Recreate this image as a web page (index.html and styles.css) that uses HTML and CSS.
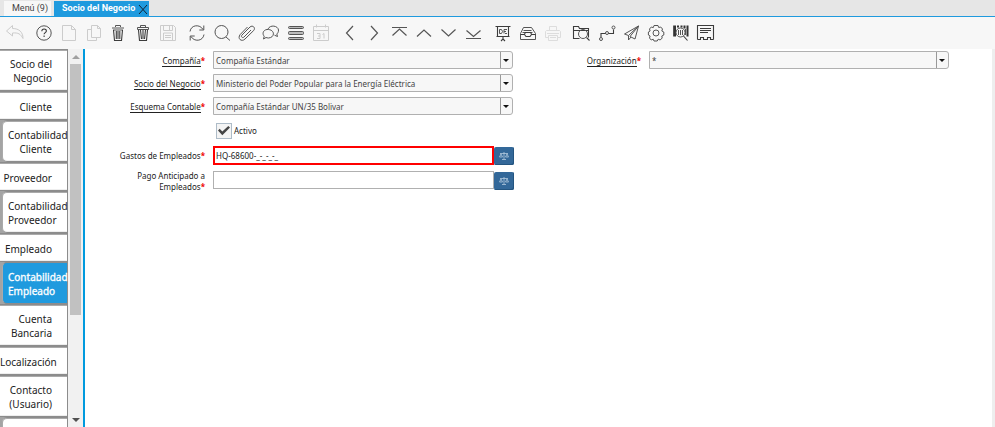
FILE: index.html
```html
<!DOCTYPE html>
<html lang="es">
<head>
<meta charset="utf-8">
<title>Socio del Negocio</title>
<link rel="stylesheet" href="styles.css">
</head>
<body>
<nav class="tabs">
  <a class="tab" href="#">Menú (9)</a>
  <a class="tab tab-active" href="#">Socio del Negocio
    <svg class="tab-close" viewBox="0 0 12 12" width="12" height="12"><path d="M2 2l8 9M10 2L2 11"/></svg>
  </a>
</nav>

<div class="toolbar">
  <div class="group group-one">
    <button class="off" aria-label="Deshacer"><svg viewBox="0 0 22 22"><path d="M8.500 3.500L2.500 9l6 5v-3c6-.500 8 1 10.500 5.500C19 10 15 6.500 8.500 6.500z"/></svg></button>
  </div>
  <div class="group">
    <button aria-label="Ayuda"><svg viewBox="0 0 22 22"><circle cx="11" cy="11" r="7.200"/><path class="bold" d="M8.800 9.300c0-3 4.600-3 4.600-.300 0 1.600-2.300 1.700-2.300 3.300M11.100 13.500v1.500"/></svg></button>
    <button class="off" aria-label="Nuevo"><svg viewBox="0 0 22 22"><path d="M4.500 3.500h9l4 4v11h-13zM13.500 3.500v4h4"/></svg></button>
    <button class="off" aria-label="Copiar"><svg viewBox="0 0 22 22"><path d="M8.500 3.500h6l3 3v9h-9zM14.500 3.500v3h3M8.500 7.500h-4v11h9v-3"/></svg></button>
    <button aria-label="Eliminar"><svg viewBox="0 0 22 22"><path d="M8.500 5V3.500h5V5M5 6h12M6 8h10"/><path class="bold" d="M6.500 8l1 10.500h7l1-10.500M9.300 9v8M11 9v8M12.800 9v8"/></svg></button>
    <button aria-label="Eliminar selección"><svg viewBox="0 0 22 22"><path d="M8.500 5V3.500h5V5M5.500 5.500h11v2h-11z"/><path class="bold" d="M6.500 8l1 10.500h7l1-10.500M8.500 8l1 9M13.500 8l-1 9M11 8v9"/></svg></button>
    <button class="off" aria-label="Guardar"><svg viewBox="0 0 22 22"><path d="M3.500 3.500h13l2 2v13h-15zM6.500 3.500v5h9v-5M12.500 4v4M6.500 18v-7h9v7M8 13.500h6M8 15.500h6"/></svg></button>
  </div>
  <div class="group">
    <button aria-label="Actualizar"><svg viewBox="0 0 22 22"><path d="M4 9.500C5 2.500 14 2 17 7.500M17.800 3.500v4.500h-4.500M18 12.500c-1 7-10 7.500-13 2M4.200 18.500V14h4.500"/></svg></button>
    <button aria-label="Buscar"><svg viewBox="0 0 22 22"><circle cx="10.500" cy="10" r="6.500"/><path d="M15 15l4 3.500"/></svg></button>
    <button aria-label="Adjuntos"><svg viewBox="0 0 22 22"><path d="M15 8l-7 7c-1.500 1.500-3.500-.300-2-2l8-8c2.500-2.300 6 .700 3.700 3.500L9 17c-3.500 3.500-8-.500-4.800-4.500L11.500 5"/></svg></button>
    <button aria-label="Mensajes"><svg viewBox="0 0 22 22"><path d="M8 7c2-4.500 10-3.500 10.500 1 .100 2-.700 3-1.700 4l.7 2.500-3-1.300M7 7.500c8-.500 8.500 8 1.500 8.500-1 0-2-.300-2.500-.500L3.500 17l.7-2.800C2 12 3 8 7 7.500z"/></svg></button>
    <button aria-label="Cuadrícula"><svg viewBox="0 0 22 22"><rect class="fill-grey" x="3.500" y="4.500" width="15" height="2" rx="1"/><rect class="fill-grey" x="3.500" y="9.500" width="15" height="3" rx="1"/><rect class="fill-grey" x="3.500" y="15.500" width="15" height="2" rx="1"/></svg></button>
    <button class="off" aria-label="Historial"><svg viewBox="0 0 22 22"><path d="M3.500 4.500h15v14h-15zM3.500 8.500h15M6.500 2.500v3M15.500 2.500v3M7 11.500h3v5H7M8 14h2M12.500 12.500l1.500-1v5"/></svg></button>
  </div>
  <div class="group">
    <button aria-label="Registro padre"><svg viewBox="0 0 22 22"><path class="arrow" d="M14 4l-6.500 7 6.500 7"/></svg></button>
    <button aria-label="Registro detalle"><svg viewBox="0 0 22 22"><path class="arrow" d="M7 4l6.500 7L7 18"/></svg></button>
    <button aria-label="Primer registro"><svg viewBox="0 0 22 22"><path class="arrow" d="M3 5.500h15M3.500 13.500l7-6.500 7 6.500"/></svg></button>
    <button aria-label="Registro anterior"><svg viewBox="0 0 22 22"><path class="arrow" d="M4 14.500L11 8l7 6.500"/></svg></button>
    <button aria-label="Registro siguiente"><svg viewBox="0 0 22 22"><path class="arrow" d="M3.500 7.500l7 6.500 7-6.500"/></svg></button>
    <button aria-label="Último registro"><svg viewBox="0 0 22 22"><path class="arrow" d="M3.500 8.500l7 6 7-6M3 16.500h15"/></svg></button>
  </div>
  <div class="group group-three">
    <button aria-label="Informe"><svg viewBox="0 0 22 22"><path class="bold" d="M3.500 4.500h15M5.500 14.500v-10M16.500 4.500v10M4.500 14.500h13M11 15v2l-2 2M11 17l2 2"/><path d="M7.500 7.500h2l1 2-1 2h-2zM15 7.500h-3v4M12 9.500h2M13 11.500h2"/></svg></button>
    <button aria-label="Archivo"><svg viewBox="0 0 22 22"><path d="M6.500 5.500h8l4 6v6h-15v-6zM6.500 8.500h8M5.500 10.500h10"/><path class="bold" d="M3.500 12.500h4l1.500 2h4l1.500-2h4M7.500 12l1-1.500h5l1 1.500"/></svg></button>
    <button class="off pale" aria-label="Imprimir"><svg viewBox="0 0 22 22"><path d="M7.500 9V4.500h7V9M6 15.500H3.500v-6l1-1h13l1 1v6H16M6.500 13.500h9v5h-9zM8 15.500h6M5 11.500h12"/></svg></button>
  </div>
  <div class="group">
    <button aria-label="Zoom"><svg viewBox="0 0 22 22"><path class="bold" d="M8.500 16.500h-6v-12h5l1 2h9v9M2.500 8.500h15"/><circle cx="12" cy="12" r="4.500"/><path class="bold" d="M15.500 15.500l3 3"/></svg></button>
    <button aria-label="Flujo de trabajo"><svg viewBox="0 0 22 22"><circle cx="5" cy="17" r="1.500"/><circle cx="11" cy="11" r="1.500"/><circle cx="17.500" cy="5.500" r="1.500"/><path class="bold" d="M5 15v-3.500h4.500M12.500 11.500h5V7.500"/></svg></button>
    <button aria-label="Enviar"><svg viewBox="0 0 22 22"><path d="M17.500 4L3.500 12l4 1.500L17.500 4 9 14.500l5 2.500 3.500-13M7.500 13.500V18l2.500-3"/></svg></button>
    <button aria-label="Proceso"><svg viewBox="0 0 22 22"><circle cx="11" cy="11" r="3"/><path d="M9 3.500h4l.7 2 2-.5 1.800 2-.7 2 2 1v3l-2 1 .4 2-2 2-2-.8-1 1.800H9l-.8-1.800-2 .8-1.700-2 .6-2-1.700-1v-3l1.700-1-.6-2 1.800-2 2 .6z"/></svg></button>
    <button aria-label="Información de producto"><svg viewBox="0 0 22 22"><path class="heavy" d="M5 3.500v11M8 3.500v2M11.500 3.500v2M14.500 3.500v3M17.500 3.500v11"/><path d="M3.500 3.500v11M15.500 7v6M8.500 8v5M10.500 8v5M12.500 8v5"/><circle cx="10.500" cy="10.500" r="4.500"/><path class="bold" d="M13.500 14l4 4.500"/></svg></button>
    <button aria-label="Formulario"><svg viewBox="0 0 22 22"><path class="bold" d="M2.500 17.500v-14h16v14M5 6.500h11M5 8.500h11M5 10.500h8M2.500 17.500h3v-2h3v2h4v-2h3v2h3"/></svg></button>
  </div>
</div>

<div class="workspace">
  <aside class="sidebar">
    <div class="side-list">
      <a class="side-tab" href="#">Socio del Negocio</a>
      <a class="side-tab" href="#">Cliente</a>
      <a class="side-tab nested" href="#">Contabilidad Cliente</a>
      <a class="side-tab" href="#">Proveedor</a>
      <a class="side-tab nested" href="#">Contabilidad Proveedor</a>
      <a class="side-tab" href="#">Empleado</a>
      <a class="side-tab nested current" href="#">Contabilidad Empleado</a>
      <a class="side-tab" href="#">Cuenta Bancaria</a>
      <a class="side-tab" href="#">Localización</a>
      <a class="side-tab" href="#">Contacto (Usuario)</a>
      <a class="side-tab nested" href="#" aria-label="Acceso"></a>
    </div>
    <div class="scrollbar">
      <span class="scroll-up"></span>
      <span class="scroll-track"><span class="scroll-thumb"></span></span>
      <span class="scroll-down"></span>
    </div>
  </aside>

  <main class="form">
    <label class="caption" for="company"><span><span class="link">Compañía</span><b>*</b></span></label>
    <div class="combo"><select id="company"><option>Compañía Estándar</option></select></div>
    <label class="caption" for="org"><span><span class="link">Organización</span><b>*</b></span></label>
    <div class="combo"><select id="org"><option>*</option></select></div>

    <label class="caption first" for="partner"><span><span class="link">Socio del Negocio</span><b>*</b></span></label>
    <div class="combo"><select id="partner"><option>Ministerio del Poder Popular para la Energía Eléctrica</option></select></div>

    <label class="caption first" for="schema"><span><span class="link">Esquema Contable</span><b>*</b></span></label>
    <div class="combo"><select id="schema"><option>Compañía Estándar UN/35 Bolivar</option></select></div>

    <div class="check"><input type="checkbox" id="active" checked><label for="active">Activo</label></div>

    <label class="caption first" for="expense"><span>Gastos de Empleados<b>*</b></span></label>
    <div class="account">
      <input class="required" type="text" id="expense" value="HQ-68600-_-_-_-_">
      <button aria-label="Cuenta de gastos"><svg viewBox="0 0 10 8" width="10" height="8"><path d="M5 0v7M3 7.500h4M1 1.500h8M2 2L.5 5h3zM8 2L6.500 5h3z"/></svg></button>
    </div>

    <label class="caption first wrap" for="prepay"><span>Pago Anticipado a Empleados<b>*</b></span></label>
    <div class="account">
      <input type="text" id="prepay">
      <button aria-label="Cuenta de anticipos"><svg viewBox="0 0 10 8" width="10" height="8"><path d="M5 0v7M3 7.500h4M1 1.500h8M2 2L.5 5h3zM8 2L6.500 5h3z"/></svg></button>
    </div>
  </main>
</div>
</body>
</html>
```

FILE: styles.css
```css
* { box-sizing: border-box; }

body {
  margin: 0;
  height: 100vh;
  overflow: hidden;
  display: flex;
  flex-direction: column;
  background: #fff;
  color: #222;
  font: 8px/11px "Noto Sans", sans-serif;
}

a { color: inherit; text-decoration: none; }
button { padding: 0; border: 0; background: none; }

/* window tabs */
.tabs {
  display: flex;
  gap: 3px;
  padding: 1px 4px 0;
  background: #e6e6e6;
  border-bottom: 1px solid #1f9ade;
}
.tab {
  display: flex;
  height: 15px;
  padding: 0 3px 0 8px;
  background: #f7f7f7;
  color: #444;
  font: 9px/14px Roboto, sans-serif;
}
.tab-active {
  padding: 0 0 0 8px;
  gap: 2px;
  background: #1f9ade;
  color: #fff;
  font-weight: 700;
}
.tab-close { margin-top: 2px; fill: none; stroke: #123; }

/* toolbar */
.toolbar {
  display: flex;
  gap: 7px;
  height: 32px;
  padding: 5px 4px;
  background: #f7f7f7;
}
.group { display: flex; justify-content: space-between; width: 146px; }
.group-one { width: 22px; }
.group-three { width: 72px; }
.toolbar button { width: 22px; height: 22px; }
.toolbar svg {
  display: block;
  width: 22px;
  height: 22px;
  fill: none;
  stroke: #555;
  stroke-width: 1;
}
.toolbar .off svg { stroke: #ccc; }
.toolbar .pale svg { stroke: #ddd; }
.toolbar .bold { stroke: #3c3c3c; stroke-width: 1.1; }
.toolbar .heavy { stroke: #333; stroke-width: 2; }
.toolbar .arrow { stroke-width: 1.2; }
.toolbar .fill-grey { fill: #bbb; }

/* sidebar */
.workspace { display: flex; flex: 1; min-height: 0; }
.sidebar {
  display: flex;
  flex: none;
  width: 85px;
  border-right: 2px solid #009ade;
  background: #fff;
}
.side-list {
  width: 68px;
  overflow: hidden;
  background: #a4a4a4;
  font-size: 10px;
  line-height: 14px;
}
.side-tab {
  display: flex;
  flex-direction: column;
  justify-content: center;
  min-height: 29px;
  padding: 7px 15px 5px 0;
  border: solid #8c8c8c;
  border-width: 1px 1px 1px 0;
  background: #fff;
  box-shadow: inset 0 1px #aaa, inset 0 -1px #eee;
  text-align: right;
  color: #222;
}
.nested {
  margin-left: 2px;
  padding-left: 5px;
  border-left-width: 1px;
  border-color: #8c8c8c #8c8c8c #8c8c8c #aaa;
  border-radius: 5px 0 0 5px;
}
.current {
  background: #1f9ade;
  box-shadow: none;
  color: #fff;
  -webkit-text-stroke: 0.3px #fff;
}
.scrollbar {
  display: flex;
  flex-direction: column;
  flex: 1;
  align-items: center;
  background: #f1f1f1;
}
.scroll-up, .scroll-down { height: 15px; display: flex; align-items: center; }
.scroll-up::before, .scroll-down::before { content: ""; border: 4px solid transparent; }
.scroll-up::before { border-top: 0; border-bottom-color: #a0a0a0; }
.scroll-down::before { border-bottom: 0; border-top-color: #505050; }
.scroll-track { flex: 1; width: 11px; }
.scroll-thumb { display: block; height: 72%; background: #c1c1c1; }

/* form */
.form {
  flex: 1;
  display: grid;
  grid-template-columns: 128fr 300fr 136fr 300fr 43fr;
  grid-auto-rows: min-content;
  row-gap: 5px;
  align-content: start;
  padding-top: 2px;
  border-right: 3px solid #eee;
}
.caption {
  display: flex;
  justify-content: flex-end;
  align-items: center;
  height: 19px;
  margin-bottom: -1px;
  padding-right: 8px;
  text-align: right;
  white-space: nowrap;
}
.caption b { color: #e00; }
.caption .link { border-bottom: 1px solid #222; }
.first { grid-column: 1; }
.combo { position: relative; height: 18px; }
.combo select {
  appearance: none;
  width: 100%;
  height: 18px;
  padding: 0 16px 0 2px;
  border: 1px solid #b0b0b0;
  border-radius: 0 3px 3px 0;
  background: #f7f7f7;
  color: #444;
  font: inherit;
}
.combo::after {
  content: "";
  position: absolute;
  right: 4px;
  top: 8px;
  border: 3px solid transparent;
  border-top-color: #111;
  border-bottom: 0;
}
.combo::before {
  content: "";
  position: absolute;
  right: 12px;
  top: 1px;
  bottom: 1px;
  border-left: 1px solid #999;
}
.check {
  grid-column: 2;
  display: flex;
  align-items: center;
  gap: 2px;
  height: 21px;
  padding-left: 3px;
}
.check input {
  appearance: none;
  width: 16px;
  height: 16px;
  margin: 0;
  border: 1px solid #aebcc8;
  background: #f4f4f4;
  display: grid;
  place-items: center;
}
.check input:checked::before {
  content: "";
  width: 12px;
  height: 10px;
  background: #444;
  clip-path: polygon(0 50%, 14% 32%, 36% 60%, 86% 4%, 100% 20%, 36% 98%);
}
.account { display: flex; height: 20px; margin-right: -1px; }
.account input {
  flex: 1;
  min-width: 0;
  height: 18px;
  padding: 0 2px;
  border: 1px solid #b0b0b0;
  background: #fff;
  color: #222;
  font: inherit;
  outline: 0;
}
.account .required { height: 19px; padding: 0 1px; border: 2px solid #f00; }
.account button {
  width: 20px;
  height: 18px;
  margin-top: 1px;
  border-radius: 2px;
  background: #336899;
  box-shadow: inset -1px -1px #245580;
  display: grid;
  place-items: center;
}
.account svg { fill: none; stroke: #b4cade; stroke-width: 0.8; }
.wrap { height: 20px; margin-bottom: 0; white-space: normal; }
.wrap > span { max-width: 76px; }
```
